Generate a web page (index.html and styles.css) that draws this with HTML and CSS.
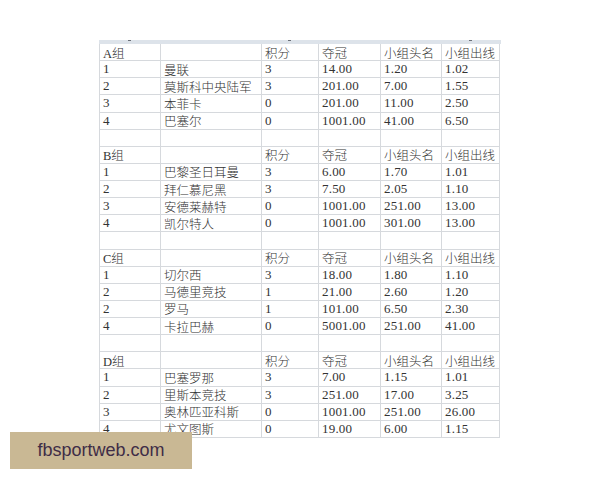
FILE: index.html
```html
<!DOCTYPE html>
<html lang="zh">
<head>
<meta charset="utf-8">
<title>小组赔率</title>
<link rel="stylesheet" href="styles.css">
</head>
<body>
<div class="page">
  <div class="strip">
    <span class="tick"></span><span></span><span class="tick"></span><span></span><span></span><span class="tick"></span>
  </div>
  <div class="sheet">
    <div class="c">A组</div><div class="c"></div><div class="c">积分</div><div class="c">夺冠</div><div class="c">小组头名</div><div class="c">小组出线</div>
    <div class="c n">1</div><div class="c">曼联</div><div class="c n">3</div><div class="c n">14.00</div><div class="c n">1.20</div><div class="c n">1.02</div>
    <div class="c n">2</div><div class="c">莫斯科中央陆军</div><div class="c n">3</div><div class="c n">201.00</div><div class="c n">7.00</div><div class="c n">1.55</div>
    <div class="c n">3</div><div class="c">本菲卡</div><div class="c n">0</div><div class="c n">201.00</div><div class="c n">11.00</div><div class="c n">2.50</div>
    <div class="c n">4</div><div class="c">巴塞尔</div><div class="c n">0</div><div class="c n">1001.00</div><div class="c n">41.00</div><div class="c n">6.50</div>
    <div class="c"></div><div class="c"></div><div class="c"></div><div class="c"></div><div class="c"></div><div class="c"></div>

    <div class="c">B组</div><div class="c"></div><div class="c">积分</div><div class="c">夺冠</div><div class="c">小组头名</div><div class="c">小组出线</div>
    <div class="c n">1</div><div class="c">巴黎圣日耳曼</div><div class="c n">3</div><div class="c n">6.00</div><div class="c n">1.70</div><div class="c n">1.01</div>
    <div class="c n">2</div><div class="c">拜仁慕尼黑</div><div class="c n">3</div><div class="c n">7.50</div><div class="c n">2.05</div><div class="c n">1.10</div>
    <div class="c n">3</div><div class="c">安德莱赫特</div><div class="c n">0</div><div class="c n">1001.00</div><div class="c n">251.00</div><div class="c n">13.00</div>
    <div class="c n">4</div><div class="c">凯尔特人</div><div class="c n">0</div><div class="c n">1001.00</div><div class="c n">301.00</div><div class="c n">13.00</div>
    <div class="c"></div><div class="c"></div><div class="c"></div><div class="c"></div><div class="c"></div><div class="c"></div>

    <div class="c">C组</div><div class="c"></div><div class="c">积分</div><div class="c">夺冠</div><div class="c">小组头名</div><div class="c">小组出线</div>
    <div class="c n">1</div><div class="c">切尔西</div><div class="c n">3</div><div class="c n">18.00</div><div class="c n">1.80</div><div class="c n">1.10</div>
    <div class="c n">2</div><div class="c">马德里竞技</div><div class="c n">1</div><div class="c n">21.00</div><div class="c n">2.60</div><div class="c n">1.20</div>
    <div class="c n">2</div><div class="c">罗马</div><div class="c n">1</div><div class="c n">101.00</div><div class="c n">6.50</div><div class="c n">2.30</div>
    <div class="c n">4</div><div class="c">卡拉巴赫</div><div class="c n">0</div><div class="c n">5001.00</div><div class="c n">251.00</div><div class="c n">41.00</div>
    <div class="c"></div><div class="c"></div><div class="c"></div><div class="c"></div><div class="c"></div><div class="c"></div>

    <div class="c">D组</div><div class="c"></div><div class="c">积分</div><div class="c">夺冠</div><div class="c">小组头名</div><div class="c">小组出线</div>
    <div class="c n">1</div><div class="c">巴塞罗那</div><div class="c n">3</div><div class="c n">7.00</div><div class="c n">1.15</div><div class="c n">1.01</div>
    <div class="c n">2</div><div class="c">里斯本竞技</div><div class="c n">3</div><div class="c n">251.00</div><div class="c n">17.00</div><div class="c n">3.25</div>
    <div class="c n">3</div><div class="c">奥林匹亚科斯</div><div class="c n">0</div><div class="c n">1001.00</div><div class="c n">251.00</div><div class="c n">26.00</div>
    <div class="c n">4</div><div class="c">尤文图斯</div><div class="c n">0</div><div class="c n">19.00</div><div class="c n">6.00</div><div class="c n">1.15</div>
  </div>
</div>
<div class="mark">fbsportweb.com</div>
</body>
</html>
```
FILE: styles.css
```css
html, body {
  margin: 0;
  padding: 0;
  background: #ffffff;
}
.page {
  padding: 40px 0 0 99px;
}
.strip {
  display: grid;
  grid-template-columns: 61px 101px 57px 62px 61px 58px;
  width: 402px;
  height: 4px;
  background: #dde3ea;
}
.strip span {
  display: flex;
  justify-content: center;
}
.strip .tick::after {
  content: "";
  width: 3px;
  height: 1px;
  background: #6b7078;
}
.sheet {
  display: grid;
  grid-template-columns: 61px 101px 57px 62px 61px 58px;
  grid-auto-rows: 17.13px;
  width: 402px;
  border-left: 1px solid #d6d9dd;
  box-sizing: border-box;
  font-family: "Liberation Serif", "Noto Sans CJK SC", serif;
  font-size: 12.5px;
  color: #333333;
}
.c {
  box-sizing: border-box;
  border-right: 1px solid #d6d9dd;
  border-bottom: 1px solid #d6d9dd;
  padding-left: 3px;
  display: flex;
  align-items: center;
  white-space: nowrap;
  overflow: hidden;
  font-weight: 300;
}
.n {
  font-size: 13px;
  font-weight: 400;
  letter-spacing: 0.2px;
}
.mark {
  position: absolute;
  left: 10px;
  top: 432px;
  width: 182px;
  height: 37px;
  background: #c9b894;
  color: #3f2d47;
  font-family: "Liberation Sans", Arial, sans-serif;
  font-size: 18px;
  display: flex;
  align-items: center;
  justify-content: center;
}
```
